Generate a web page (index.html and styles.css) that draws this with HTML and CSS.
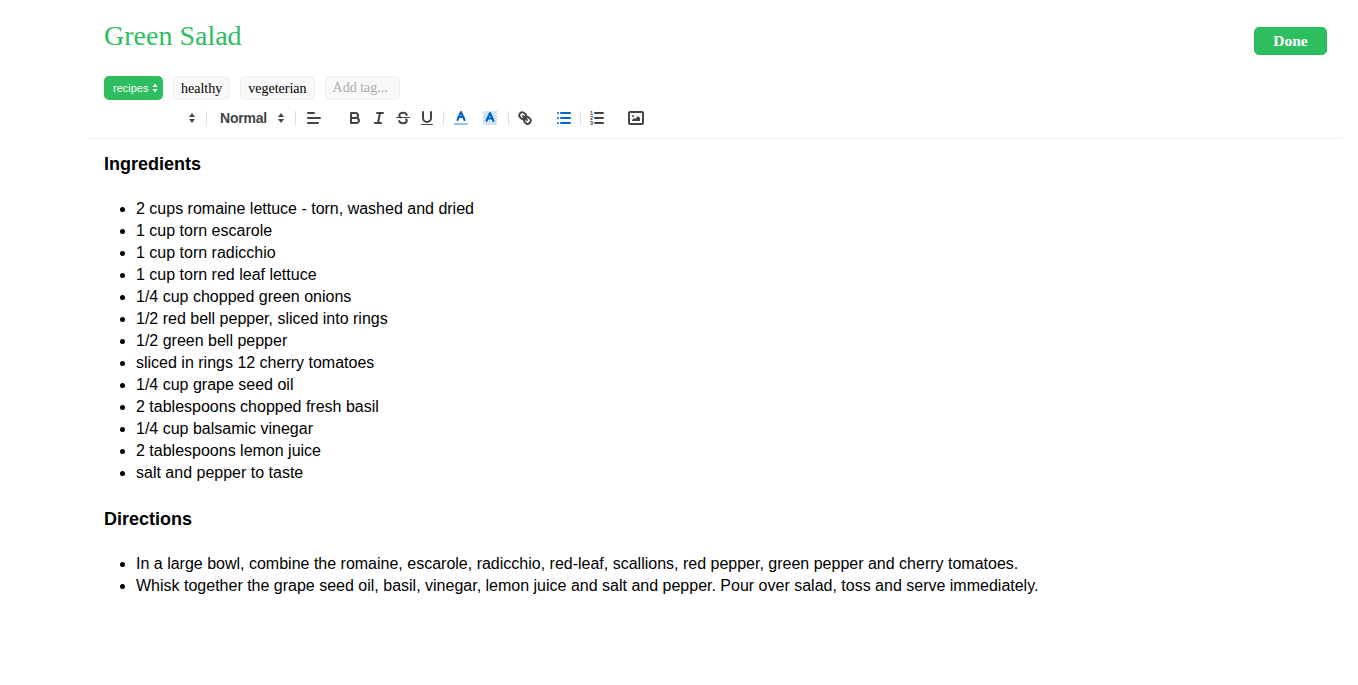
FILE: index.html
```html
<!DOCTYPE html>
<html lang="en">
<head>
<meta charset="utf-8">
<title>Green Salad</title>
<link rel="stylesheet" href="styles.css">
</head>
<body>
<svg class="defs" width="0" height="0" aria-hidden="true">
  <defs>
    <pattern id="stripes" width="2" height="2" patternUnits="userSpaceOnUse" patternTransform="rotate(45)">
      <rect width="1" height="2" class="blue-fill"></rect>
    </pattern>
  </defs>
</svg>
<main class="page">
  <header class="head">
    <h1 class="title">Green Salad</h1>
    <button class="done" type="button">Done</button>
  </header>
  <div class="tags">
    <span class="notebook">recipes
      <svg class="nb-arrows" viewBox="0 0 6 10"><polygon points="0.5 4 3 0.5 5.5 4"></polygon><polygon points="0.5 6 3 9.5 5.5 6"></polygon></svg>
    </span>
    <span class="chip">healthy</span>
    <span class="chip">vegeterian</span>
    <span class="chip placeholder">Add tag...</span>
  </div>
  <div class="toolbar">
    <svg class="ico first" viewBox="0 0 18 18"><polygon class="fill" points="6 8 9 4 12 8"></polygon><polygon class="fill" points="6 10 9 14 12 10"></polygon></svg>
    <span class="sep s5"></span>
    <span class="picker">Normal</span>
    <svg class="ico" viewBox="0 0 18 18"><polygon class="fill" points="6 8 9 4 12 8"></polygon><polygon class="fill" points="6 10 9 14 12 10"></polygon></svg>
    <span class="sep s5"></span>
    <svg class="ico m9" viewBox="0 0 18 18"><line class="st" x1="3" x2="9" y1="4" y2="4"></line><line class="st" x1="3" x2="15" y1="9" y2="9"></line><line class="st" x1="3" x2="13" y1="14" y2="14"></line></svg>
    <svg class="ico m23" viewBox="0 0 18 18"><path class="st" d="M5,4H9.5A2.5,2.5,0,0,1,12,6.5v0A2.5,2.5,0,0,1,9.5,9H5V4Z"></path><path class="st" d="M5,9h5.5A2.5,2.5,0,0,1,13,11.5v0A2.5,2.5,0,0,1,10.5,14H5V9Z"></path></svg>
    <svg class="ico m6" viewBox="0 0 18 18"><line class="st" x1="7" x2="13" y1="4" y2="4"></line><line class="st" x1="5" x2="11" y1="14" y2="14"></line><line class="st" x1="8" x2="10" y1="14" y2="4"></line></svg>
    <svg class="ico m6" viewBox="0 0 18 18"><line class="thin" x1="15.5" x2="2.5" y1="8.5" y2="8.5"></line><path class="st" d="M12.8,6C12.4,4.6 11,3.8 9,3.8C6.9,3.8 5.3,4.8 5.3,6.4C5.3,7.4 5.9,8 6.8,8.5"></path><path class="st" d="M5.2,12C5.6,13.4 7,14.2 9,14.2C11.1,14.2 12.8,13.2 12.8,11.6C12.8,11 12.6,10.6 12.2,10.2"></path></svg>
    <svg class="ico m6" viewBox="0 0 18 18"><path class="st" d="M5,3V9a4,4,0,0,0,4,4H9a4,4,0,0,0,4-4V3"></path><rect class="fill" height="1" rx="0.5" width="12" x="3" y="15"></rect></svg>
    <span class="sep s7"></span>
    <svg class="ico m8" viewBox="0 0 18 18"><polyline class="st blue" points="5.5 11 9 3 12.5 11"></polyline><line class="st blue" x1="11.63" x2="6.38" y1="8" y2="8"></line><rect class="bar" x="2" y="14" width="14" height="2" rx="0.5"></rect></svg>
    <svg class="ico m11" viewBox="0 0 18 18"><rect class="hatch" x="2" y="2" width="14" height="14"></rect><polyline class="st blue" points="5.5 12 9 4 12.5 12"></polyline><line class="st blue" x1="11.63" x2="6.38" y1="9.5" y2="9.5"></line></svg>
    <span class="sep s9"></span>
    <svg class="ico m7" viewBox="0 0 18 18"><line class="st" x1="7" x2="11" y1="7" y2="11"></line><path class="st" d="M8.9,4.577a3.476,3.476,0,0,1,.36,4.679A3.476,3.476,0,0,1,4.577,8.9C3.185,7.5,2.035,6.4,4.217,4.217S7.5,3.185,8.9,4.577Z"></path><path class="st" d="M13.423,9.1a3.476,3.476,0,0,0-4.679-.36,3.476,3.476,0,0,0,.36,4.679c1.392,1.392,2.5,2.542,4.679.36S14.815,10.5,13.423,9.1Z"></path></svg>
    <svg class="ico m21" viewBox="0 0 18 18"><line class="st blue" x1="6" x2="15" y1="4" y2="4"></line><line class="st blue" x1="6" x2="15" y1="9" y2="9"></line><line class="st blue" x1="6" x2="15" y1="14" y2="14"></line><line class="st blue" x1="3" x2="3" y1="4" y2="4"></line><line class="st blue" x1="3" x2="3" y1="9" y2="9"></line><line class="st blue" x1="3" x2="3" y1="14" y2="14"></line></svg>
    <span class="sep s7"></span>
    <svg class="ico m7" viewBox="0 0 18 18"><line class="st" x1="7" x2="15" y1="4" y2="4"></line><line class="st" x1="7" x2="15" y1="9" y2="9"></line><line class="st" x1="7" x2="15" y1="14" y2="14"></line><text class="num" x="2" y="6">1</text><text class="num" x="2" y="11">2</text><text class="num" x="2" y="16">3</text></svg>
    <svg class="ico m21" viewBox="0 0 18 18"><rect class="st" x="2" y="3" width="14" height="12" rx="1"></rect><circle class="fill" cx="6" cy="7" r="1"></circle><polygon class="fill" points="5 12 5 11 7 9 8 10 11 7 13 9 13 12"></polygon></svg>
  </div>
  <article class="content">
    <h3>Ingredients</h3>
    <ul>
      <li>2 cups romaine lettuce - torn, washed and dried</li>
      <li>1 cup torn escarole</li>
      <li>1 cup torn radicchio</li>
      <li>1 cup torn red leaf lettuce</li>
      <li>1/4 cup chopped green onions</li>
      <li>1/2 red bell pepper, sliced into rings</li>
      <li>1/2 green bell pepper</li>
      <li>sliced in rings 12 cherry tomatoes</li>
      <li>1/4 cup grape seed oil</li>
      <li>2 tablespoons chopped fresh basil</li>
      <li>1/4 cup balsamic vinegar</li>
      <li>2 tablespoons lemon juice</li>
      <li>salt and pepper to taste</li>
    </ul>
    <h3>Directions</h3>
    <ul>
      <li>In a large bowl, combine the romaine, escarole, radicchio, red-leaf, scallions, red pepper, green pepper and cherry tomatoes.</li>
      <li>Whisk together the grape seed oil, basil, vinegar, lemon juice and salt and pepper. Pour over salad, toss and serve immediately.</li>
    </ul>
  </article>
</main>
</body>
</html>
```
FILE: styles.css
```css
html, body { margin: 0; background: #fff; }
body { font-family: "Liberation Sans", Arial, sans-serif; color: #000; overflow: hidden; height: 685px; }
.defs { position: absolute; }
.blue-fill { fill: #06c; }
.page { margin: 0 16px 0 88px; }
.head { display: flex; justify-content: space-between; align-items: flex-start; padding: 19px 15px 0 16px; height: 57px; box-sizing: border-box; }
.title { margin: 0; font: 400 28px/34px "Liberation Serif", serif; color: #2dbe60; }
.done { margin-top: 8px; width: 73px; height: 28px; padding: 0; border: 1px solid #2bb65c; border-radius: 5px; background: #2dbe60; color: #fff; font: 700 15.5px/26px "Liberation Serif", serif; }
.tags { display: flex; gap: 10px; padding-left: 16px; height: 24px; margin-top: 19px; }
.notebook { display: flex; align-items: center; gap: 4px; width: 59px; height: 24px; padding: 0 0 1px 9px; box-sizing: border-box; border-radius: 5px; background: #2dbe60; color: #fff; font-size: 11px; }
.nb-arrows { width: 6px; height: 10px; fill: #fff; }
.chip { height: 24px; box-sizing: border-box; padding: 0 7px; border: 1px solid #eee; border-radius: 5px; background: #f8f8f8; font: 14px/23px "Liberation Serif", serif; }
.placeholder { color: #aaa; width: 75px; line-height: 21px; }
.toolbar { display: flex; align-items: center; height: 24px; margin-top: 6px; padding: 0 0 8px 16px; border-bottom: 1px solid #eee; }
.ico { width: 18px; height: 18px; flex: none; }
.st { fill: none; stroke: #444; stroke-width: 2; stroke-linecap: round; stroke-linejoin: round; }
.thin { fill: none; stroke: #444; stroke-width: 1; stroke-linecap: round; }
.fill { fill: #444; }
.st.blue { stroke: #06c; }
.bar { fill: #06c; opacity: .4; }
.hatch { fill: url(#stripes); opacity: .35; }
.num { font: 700 5.5px "Liberation Sans", sans-serif; fill: #444; }
.sep { width: 1px; height: 14px; background: #ddd; flex: none; }
.picker { margin-left: 13px; width: 52px; font-size: 14px; font-weight: 700; letter-spacing: -0.2px; color: #444; flex: none; }
.first { margin-left: 79px; }
.s5 { margin-left: 5px; }
.s7 { margin-left: 7px; }
.s9 { margin-left: 9px; }
.m6 { margin-left: 6px; }
.m7 { margin-left: 7px; }
.m8 { margin-left: 8px; }
.m9 { margin-left: 9px; }
.m11 { margin-left: 11px; }
.m21 { margin-left: 21px; }
.m23 { margin-left: 23px; }
.content { padding: 14px 16px 0; font-size: 16px; line-height: 22px; }
.content h3 { margin: 0 0 23px; font-size: 18px; line-height: 22px; font-weight: 700; }
.content ul { margin: 0 0 24px; padding-left: 32px; }
```
